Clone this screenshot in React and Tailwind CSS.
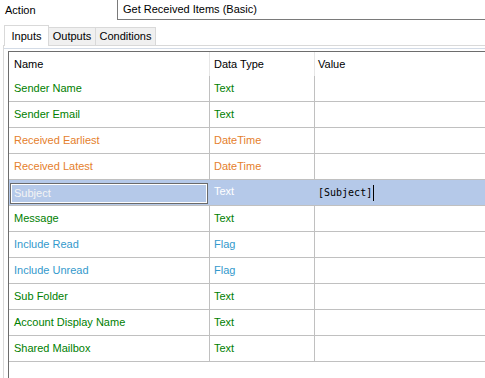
const rows = [
  { name: "Sender Name", type: "Text", color: "text-[#008000]" },
  { name: "Sender Email", type: "Text", color: "text-[#008000]" },
  { name: "Received Earliest", type: "DateTime", color: "text-[#e5802c]" },
  { name: "Received Latest", type: "DateTime", color: "text-[#e5802c]" },
  { name: "Subject", type: "Text", color: "text-white", selected: true, value: "[Subject]" },
  { name: "Message", type: "Text", color: "text-[#008000]" },
  { name: "Include Read", type: "Flag", color: "text-[#3399cc]" },
  { name: "Include Unread", type: "Flag", color: "text-[#3399cc]" },
  { name: "Sub Folder", type: "Text", color: "text-[#008000]" },
  { name: "Account Display Name", type: "Text", color: "text-[#008000]" },
  { name: "Shared Mailbox", type: "Text", color: "text-[#008000]" },
];

function Row({ row }) {
  if (row.selected) {
    return (
      <div className="flex h-[26px] border-b border-[#c0c0c0] bg-[#b5c9e9]">
        <div className="w-[201px] pl-[1px] pt-[3px]">
          <div className="w-[198px] h-[21px] border border-[#6a6a6a] shadow-[inset_0_0_0_1px_#ffffff] flex items-center pl-[3px] text-[#f4f4f4]">
            {row.name}
          </div>
        </div>
        <div className="w-[105px] pl-[4px] pb-[3px] flex items-center text-white">
          {row.type}
        </div>
        <div className="flex-1 pl-[3px] flex items-center text-black font-['DejaVu_Sans_Mono',monospace] text-[10px]">
          <span>{row.value}</span>
          <span className="ml-[1px] w-px h-[16px] bg-black" />
        </div>
      </div>
    );
  }

  return (
    <div className={`flex h-[26px] border-b border-[#c0c0c0] ${row.color}`}>
      <div className="w-[201px] border-r border-[#c0c0c0] pl-[5px] flex items-center">
        {row.name}
      </div>
      <div className="w-[105px] border-r border-[#c0c0c0] pl-[4px] flex items-center">
        {row.type}
      </div>
      <div className="flex-1" />
    </div>
  );
}

export default function App() {
  return (
    <div className="w-[485px] h-[378px] overflow-hidden bg-white text-[11px] leading-none text-black font-['Liberation_Sans',Arial,sans-serif] flex flex-col">
      <div className="flex h-[20px] shrink-0">
        <div className="w-[117px] pl-[5px] flex items-center">Action</div>
        <div className="flex-1 border-l border-b border-[#7a7a7a] pl-[5px] flex items-center">
          Get Received Items (Basic)
        </div>
      </div>

      <div className="ml-[3px] mt-[5px] flex flex-col flex-1 min-h-0">
        <div className="flex items-end h-[21px] shrink-0">
          <div className="w-px h-px border-b border-[#d9d9d9]" />
          <div className="w-[45px] h-[21px] border-l border-t border-r border-[#d9d9d9] bg-white flex items-center justify-center">
            Inputs
          </div>
          <div className="w-[47px] h-[19px] border-t border-r border-b border-[#d9d9d9] bg-[#f0f0f0] flex items-center justify-center">
            Outputs
          </div>
          <div className="w-[60px] h-[19px] border-t border-r border-b border-[#d9d9d9] bg-[#f0f0f0] flex items-center justify-center">
            Conditions
          </div>
          <div className="flex-1 h-px border-b border-[#d9d9d9]" />
        </div>

        <div className="flex-1 border-l border-[#d9d9d9] flex flex-col pt-[2px]">
          <div className="h-px bg-[#d3dbe6]" />
          <div className="flex-1 ml-[4px] mt-[2px] border-l border-t border-[#6d6d6d] flex flex-col">
            <div className="flex h-[24px] shrink-0">
              <div className="w-[201px] border-r border-[#e6e6e6] pl-[5px] flex items-center">Name</div>
              <div className="w-[105px] border-r border-[#e6e6e6] pl-[4px] flex items-center">Data Type</div>
              <div className="flex-1 pl-[3px] flex items-center">Value</div>
            </div>
            {rows.map((row) => (
              <Row key={row.name} row={row} />
            ))}
          </div>
        </div>
      </div>
    </div>
  );
}
